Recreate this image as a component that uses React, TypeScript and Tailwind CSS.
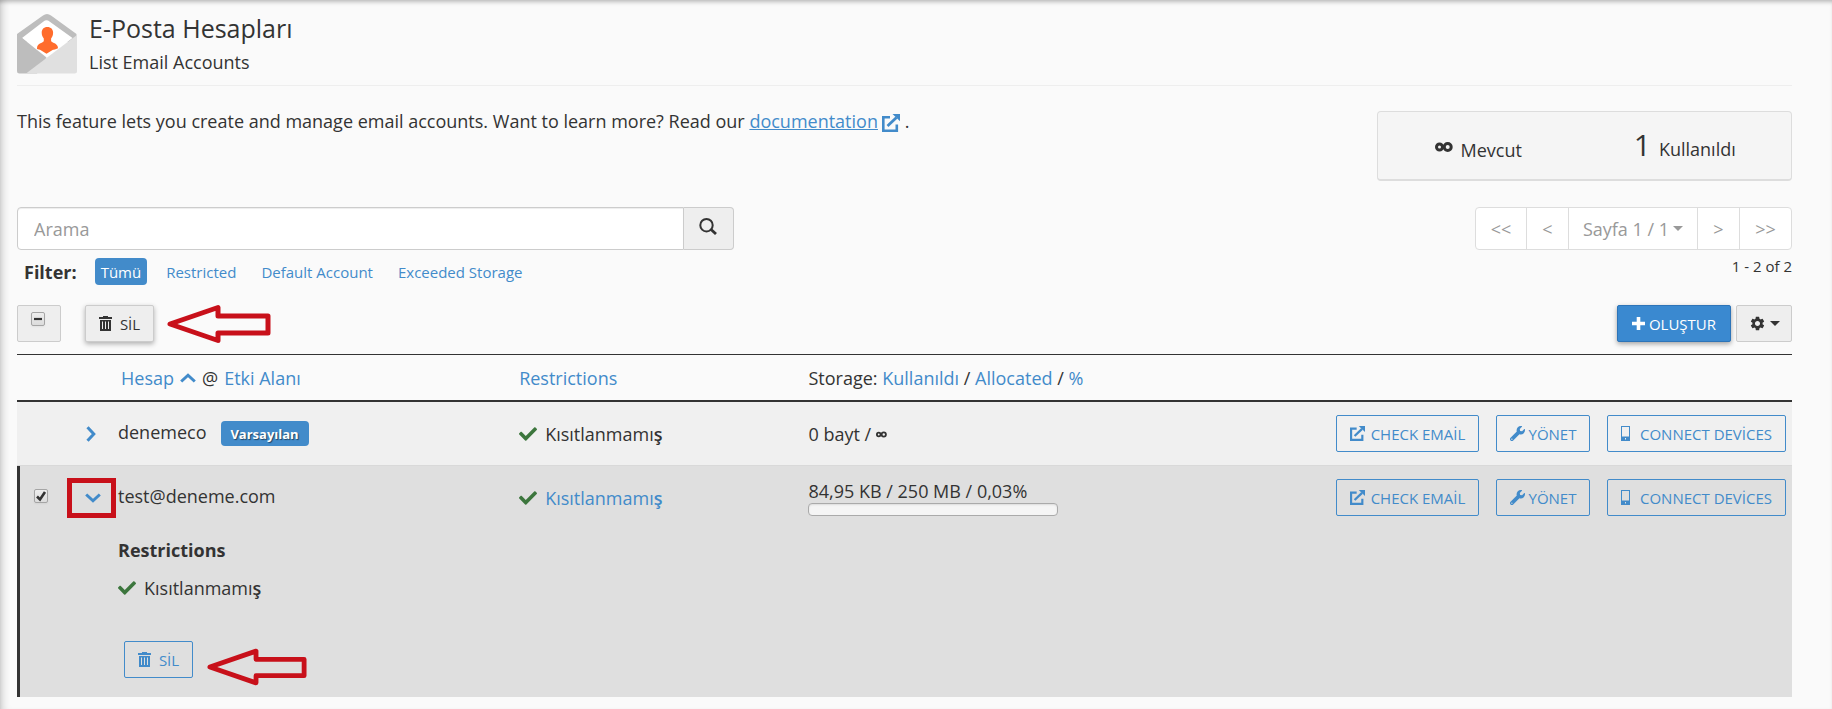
import { useEffect, useRef, useState } from "react";
import type { ReactNode } from "react";
import { FaCheck, FaWrench } from "react-icons/fa";
import { MdSettings } from "react-icons/md";

const link = "text-[#428bca] hover:underline";

function MailLogo() {
  return (
    <svg viewBox="0 0 60 60" className="size-15 shrink-0" aria-hidden="true">
      <path d="M0 20 26 1.500q4-3 8 0L59.500 20v8H0z" fill="#bdbdbd" />
      <path d="M5 24 26.500 7.500q3-2.500 6 0L55.500 24 29.500 44z" fill="#fff" />
      <path d="M0 20v37q0 2.500 2.500 2.500H20L29.500 43.500z" fill="#bdbdbd" />
      <path d="M60 21v36q0 2.500-2.500 2.500H9z" fill="#e0e0e0" />
      <path
        d="M30.300 13c-3.600 0-5.600 2.300-5.600 5.800 0 2.400.9 4.300 2.100 5.700v2.700c-1.300 1.800-6.700 1.900-6.800 7v.8q2 .8 3 .8l6.500 4 6.500-4q1 0 5-1.500c.2-5-5.400-5.300-6.900-7.100v-2.700c1.200-1.400 2-3.300 2-5.700 0-3.500-2.200-5.800-5.800-5.800z"
        fill="#ff6c2c"
      />
    </svg>
  );
}

function ExternalIcon({ className }: { className: string }) {
  return (
    <svg viewBox="0 0 18 18" className={className} fill="none" stroke="currentColor" aria-hidden="true">
      <path d="M8 3.200H1.300V16.700H14.800V10.500" strokeWidth="2.600" />
      <path d="M5.500 12 14.500 3.500" strokeWidth="2.800" />
      <path d="M10.500 0H18v7.200z" fill="currentColor" stroke="none" />
    </svg>
  );
}

function TrashIcon() {
  return (
    <svg viewBox="0 0 13 15" className="h-[15px] w-[13px]" fill="currentColor" aria-hidden="true">
      <path d="M4 0h5v1h4v2H0V1h4z" />
      <path fillRule="evenodd" d="M1 4h11v11H1zM3 5.500v7.500h1V5.500zM6 5.500v7.500h1V5.500zM9 5.500v7.500h1V5.500z" />
    </svg>
  );
}

function PhoneIcon() {
  return (
    <svg viewBox="0 0 9 15" className="h-[15px] w-[9px]" fill="currentColor" aria-hidden="true">
      <path fillRule="evenodd" d="M0 0h9v15H0zM1 1v9.500h7V1zM4 12v1.500h1V12z" />
    </svg>
  );
}

function PlusIcon() {
  return (
    <svg viewBox="0 0 13 13" className="size-[13px]" fill="currentColor" aria-hidden="true">
      <path d="M4.700 0h3.600v4.700H13v3.600H8.300V13H4.700V8.300H0V4.700h4.700z" />
    </svg>
  );
}

function SearchIcon() {
  return (
    <svg viewBox="0 0 18 17" className="h-[17px] w-[18px]" fill="none" stroke="currentColor" aria-hidden="true">
      <circle cx="7.500" cy="7.200" r="6.200" strokeWidth="2" />
      <path d="m11.500 11 5.500 5" strokeWidth="2.800" />
    </svg>
  );
}

function InfinityIcon({ className }: { className: string }) {
  return (
    <svg viewBox="0 0 18 10" className={className} fill="none" stroke="currentColor" strokeWidth="3" aria-hidden="true">
      <circle cx="4.500" cy="5" r="3" />
      <circle cx="12.700" cy="5" r="3.500" />
    </svg>
  );
}

function Chevron({ className }: { className: string }) {
  return (
    <svg viewBox="0 0 16 10" className={className} fill="none" stroke="currentColor" strokeWidth="3" aria-hidden="true">
      <path d="m1.200 1.500 6.800 6.300 6.800-6.300" />
    </svg>
  );
}

function Caret() {
  return (
    <svg viewBox="0 0 10 5" className="h-[5px] w-[10px]" fill="currentColor" aria-hidden="true">
      <path d="M0 0h10L5 5z" />
    </svg>
  );
}

function Arrow({ className }: { className: string }) {
  return (
    <svg viewBox="0 0 104 40" className={className} fill="none" stroke="#c8101a" strokeWidth="5" aria-hidden="true">
      <path d="M3 20 51 3.500v8.500h50v17H51v7.500z" strokeLinejoin="round" />
    </svg>
  );
}

function Tick({ label, state }: { label: string; state: "checked" | "mixed" }) {
  const ref = useRef<HTMLInputElement>(null);
  useEffect(() => {
    if (ref.current) ref.current.indeterminate = state === "mixed";
  }, [state]);
  return (
    <span className="relative block size-[14px]">
      <input
        ref={ref}
        type="checkbox"
        aria-label={label}
        defaultChecked={state === "checked"}
        className="block size-[14px] appearance-none rounded-xs border border-[#a5a5a5] bg-linear-to-b from-[#eeeeee] to-[#dcdcdc] shadow-xs"
      />
      <svg viewBox="0 0 14 14" className="pointer-events-none absolute inset-0" fill="none" stroke="#333" aria-hidden="true">
        {state === "mixed" ? <path d="M3 7h8" strokeWidth="2.200" /> : <path d="m3 7.500 3 3L11 3" strokeWidth="2.600" />}
      </svg>
    </span>
  );
}

function Unrestricted({ linked = false }: { linked?: boolean }) {
  const text = (
    <>
      Kısıtlanmamı<span className="font-semibold">ş</span>
    </>
  );
  return (
    <span className="flex items-center gap-2">
      <FaCheck className="size-[18px] text-[#3c763d]" aria-hidden="true" />
      {linked ? (
        <a href="#restrictions" className={link}>
          {text}
        </a>
      ) : (
        <span>{text}</span>
      )}
    </span>
  );
}

function OutlineButton({ icon, children, className = "" }: { icon: ReactNode; children: ReactNode; className?: string }) {
  return (
    <button
      type="button"
      className={`flex h-[37px] items-center justify-center whitespace-nowrap rounded-xs border border-[#428bca] text-[15px] text-[#428bca] ${className}`}
    >
      {icon}
      {children}
    </button>
  );
}

function RowActions() {
  return (
    <div className="flex justify-end gap-[17px] pr-1.5">
      <OutlineButton className="w-[143px] gap-1.5" icon={<ExternalIcon className="size-[15px]" />}>
        CHECK EMAİL
      </OutlineButton>
      <OutlineButton className="w-[94px] gap-1" icon={<FaWrench className="size-[15px]" aria-hidden="true" />}>
        YÖNET
      </OutlineButton>
      <OutlineButton className="w-[179px] gap-2.5" icon={<PhoneIcon />}>
        CONNECT DEVİCES
      </OutlineButton>
    </div>
  );
}

const filters = ["Tümü", "Restricted", "Default Account", "Exceeded Storage"];

export default function App() {
  const [filter, setFilter] = useState("Tümü");
  const page = "flex h-full items-center justify-center border-r border-[#ddd] last:border-r-0";
  const head = "border-t border-b-2 border-[#333] p-0 font-normal";
  return (
    <main className="min-h-screen bg-[#fafafa] pb-3 pl-[17px] pr-10 pt-3.5 font-['Open_Sans','Noto_Sans',sans-serif] text-lg leading-6 text-[#333] shadow-[inset_8px_0_8px_-6px_rgba(0,0,0,0.2),inset_0_4px_4px_-2px_rgba(0,0,0,0.25)]">
      <header className="flex gap-3 border-b border-[#eee] pb-[11px]">
        <MailLogo />
        <div>
          <h1 className="text-[25px] leading-7">E-Posta Hesapları</h1>
          <p className="mt-2">List Email Accounts</p>
        </div>
      </header>

      <section className="mt-[25px] flex items-start justify-between">
        <p className="-mt-0.5">
          This feature lets you create and manage email accounts. Want to learn more? Read our{" "}
          <a href="#documentation" className="text-[#428bca]">
            <span className="underline">documentation</span>
            <ExternalIcon className="ml-1 inline size-[18px]" />
          </a>{" "}
          .
        </p>
        <div className="grid h-[70px] w-[415px] grid-cols-2 rounded-sm border border-b-2 border-[#ddd] bg-[#f5f5f5]">
          <div className="flex items-start justify-center gap-2 pt-[26px] pr-1.5">
            <InfinityIcon className="mt-1 h-[10px] w-[18px]" />
            Mevcut
          </div>
          <div className="flex items-baseline justify-center gap-2 self-center pt-0.5 pr-1.5">
            <span className="text-[30px]">1</span> Kullanıldı
          </div>
        </div>
      </section>

      <section className="mt-[26px] flex items-start justify-between">
        <div>
          <form className="flex h-[43px] w-[717px]" onSubmit={(e) => e.preventDefault()}>
            <input
              type="text"
              placeholder="Arama"
              aria-label="Arama"
              className="min-w-0 grow rounded-l-sm border border-[#ccc] bg-white px-4 shadow-[inset_0_1px_1px_rgba(0,0,0,0.075)] placeholder:text-[#999]"
            />
            <button
              type="submit"
              aria-label="Ara"
              className="flex w-[50px] items-center justify-center rounded-r-sm border border-l-0 border-[#ccc] bg-[#eee] pb-1 pr-0.5"
            >
              <SearchIcon />
            </button>
          </form>
          <div className="mt-2 flex h-[27px] items-center pl-[7px] text-[15px]">
            <span className="mr-[18px] text-lg font-bold">Filter:</span>
            <div className="flex gap-[13px]">
              {filters.map((name) => (
                <button
                  key={name}
                  type="button"
                  onClick={() => setFilter(name)}
                  className={`h-[27px] rounded-sm px-1.5 ${name === filter ? "bg-[#428bca] text-white" : "text-[#428bca]"}`}
                >
                  {name}
                </button>
              ))}
            </div>
          </div>
        </div>
        <div className="text-right">
          <nav className="flex h-[43px] w-[317px] overflow-hidden rounded-sm border border-[#ddd] bg-white text-[#999]">
            <button type="button" className={`w-[51px] ${page}`}>&lt;&lt;</button>
            <button type="button" className={`w-[42px] ${page}`}>&lt;</button>
            <button type="button" className={`grow gap-1 ${page}`}>
              Sayfa 1 / 1<Caret />
            </button>
            <button type="button" className={`w-[42px] ${page}`}>&gt;</button>
            <button type="button" className={`w-[51px] ${page}`}>&gt;&gt;</button>
          </nav>
          <p className="mt-1 text-[15px]">1 - 2 of 2</p>
        </div>
      </section>

      <section className="mt-5 flex h-[37px] items-stretch text-[15px]">
        <label className="flex w-11 justify-center rounded-xs border border-[#ccc] bg-[#eee] pt-1.5 pr-0.5">
          <Tick label="Tümünü seç" state="mixed" />
        </label>
        <div className="relative ml-6">
          <button
            type="button"
            className="flex h-full w-[69px] items-center justify-center gap-2 rounded-xs border border-[#ccc] bg-[#eee] shadow-[0_2px_5px_rgba(0,0,0,0.3)]"
          >
            <TrashIcon />
            SİL
          </button>
          <Arrow className="absolute -top-px left-full ml-[13px] h-10 w-[104px]" />
        </div>
        <button
          type="button"
          className="ml-auto flex w-[114px] items-center justify-center gap-1 rounded-xs border border-[#2d74b8] bg-[#3a89d0] text-white shadow-[0_2px_5px_rgba(0,0,0,0.35)]"
        >
          <PlusIcon />
          OLUŞTUR
        </button>
        <button
          type="button"
          aria-label="Ayarlar"
          className="ml-[5px] flex w-14 items-center justify-center gap-1 rounded-xs border border-[#ccc] bg-[#eee]"
        >
          <MdSettings className="size-[17px]" aria-hidden="true" />
          <Caret />
        </button>
      </section>

      <table className="mt-3 w-full table-fixed border-separate border-spacing-0 text-left">
        <colgroup>
          <col className="w-[50px]" />
          <col className="w-[51px]" />
          <col className="w-[22.6%]" />
          <col className="w-[16.3%]" />
          <col />
          <col className="w-[460px]" />
        </colgroup>
        <thead>
          <tr className="h-12">
            <th className={head} />
            <th className={head} />
            <th className={head}>
              <span className="flex items-center gap-1.5 pl-[3px]">
                <a href="#account" className={link}>
                  Hesap
                </a>
                <Chevron className="h-[10px] w-4 rotate-180 text-[#428bca]" />@
                <a href="#domain" className={link}>
                  Etki Alanı
                </a>
              </span>
            </th>
            <th className={head}>
              <a href="#restrictions" className={link}>
                Restrictions
              </a>
            </th>
            <th className={head}>
              Storage:{" "}
              <a href="#used" className={link}>
                Kullanıldı
              </a>{" "}
              /{" "}
              <a href="#allocated" className={link}>
                Allocated
              </a>{" "}
              /{" "}
              <a href="#percent" className={link}>
                %
              </a>
            </th>
            <th className={head} />
          </tr>
        </thead>
        <tbody>
          <tr className="h-[63px] bg-[#f0f0f0]">
            <td className="p-0" />
            <td className="p-0">
              <button type="button" aria-label="Genişlet" className="ml-4 flex text-[#428bca]">
                <Chevron className="h-[10px] w-4 -rotate-90" />
              </button>
            </td>
            <td className="p-0">
              <span className="flex items-center gap-3.5">
                <span className="pb-1">denemeco</span>
                <span className="flex h-[25px] w-[88px] items-center justify-center rounded-sm bg-[#428bca] text-[13px] font-bold text-white text-shadow-[1px_1px_1px_rgba(0,0,0,0.5)]">
                  Varsayılan
                </span>
              </span>
            </td>
            <td className="p-0">
              <Unrestricted />
            </td>
            <td className="p-0">
              0 bayt / <InfinityIcon className="mb-0.5 inline h-[7px] w-[11px]" />
            </td>
            <td className="p-0">
              <RowActions />
            </td>
          </tr>
          <tr className="h-16 bg-[#dfdfdf] *:border-t *:border-[#d9d9d9]">
            <td className="p-0 shadow-[inset_3px_0_0_#333]">
              <span className="block pb-1 pl-[17px]">
                <Tick label="test@deneme.com" state="checked" />
              </span>
            </td>
            <td className="p-0">
              <div className="relative">
                <button type="button" aria-label="Daralt" className="ml-[18px] flex text-[#428bca]">
                  <Chevron className="h-[10px] w-4" />
                </button>
                <span className="pointer-events-none absolute -top-[15px] left-0 h-10 w-[49px] border-5 border-[#c8101a]" />
              </div>
            </td>
            <td className="p-0 pb-1">test@deneme.com</td>
            <td className="p-0">
              <Unrestricted linked />
            </td>
            <td className="p-0">
              <div>84,95 KB / 250 MB / 0,03%</div>
              <div className="h-[13px] w-[250px] rounded-sm border border-[#aaa] bg-[#f5f5f5] shadow-[inset_0_1px_2px_rgba(0,0,0,0.1)]" />
            </td>
            <td className="p-0">
              <RowActions />
            </td>
          </tr>
          <tr className="h-[168px] bg-[#dfdfdf]">
            <td className="p-0 shadow-[inset_3px_0_0_#333]" />
            <td className="p-0" />
            <td colSpan={4} className="p-0 pb-[18px] pt-[9px] align-top">
              <h2 className="font-bold">Restrictions</h2>
              <div className="mt-3.5">
                <Unrestricted />
              </div>
              <div className="relative ml-1.5 mt-[41px] w-[69px]">
                <OutlineButton className="w-full gap-2" icon={<TrashIcon />}>
                  SİL
                </OutlineButton>
                <Arrow className="absolute top-1.5 left-full ml-3.5 h-10 w-[100px]" />
              </div>
            </td>
          </tr>
        </tbody>
      </table>
    </main>
  );
}
